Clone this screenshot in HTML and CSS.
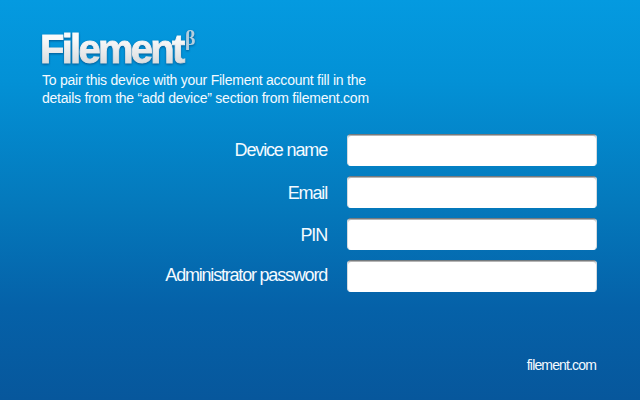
FILE: index.html
```html
<!DOCTYPE html>
<html lang="en">
<head>
<meta charset="utf-8">
<title>Filement</title>
<link rel="stylesheet" href="styles.css">
</head>
<body>
<main class="window">
  <header class="header">
    <h1 class="logo"><span class="name">Filement</span><span class="beta">β</span></h1>
    <p class="intro"><span class="line">To pair this device with your Filement account fill in the</span><span class="line">details from the “add device” section from filement.com</span></p>
  </header>
  <form class="form">
    <label class="label l1" for="device">Device name</label><input class="field" id="device">
    <label class="label l2" for="email">Email</label><input class="field" id="email">
    <label class="label l3" for="pin">PIN</label><input class="field" id="pin">
    <label class="label l4" for="password">Administrator password</label><input class="field" id="password" type="password">
  </form>
  <footer class="footer"><span class="site">filement.com</span></footer>
</main>
</body>
</html>
```

FILE: styles.css
```css
* { box-sizing: border-box; }
body { margin: 0; }
.window {
  width: 640px;
  height: 400px;
  overflow: hidden;
  display: flex;
  flex-direction: column;
  padding: 28px 43px 0 41px;
  color: #f4faff;
  font-family: "Liberation Sans", Arial, sans-serif;
  background: linear-gradient(#049ae0, #0391d6 20%, #0478bb 52%, #0561a8 77%, #07579c);
}
.header { height: 106px; }
.logo {
  margin: 0;
  height: 43px;
  display: flex;
  align-items: flex-start;
  filter: drop-shadow(0 1px 1px rgba(0, 40, 90, 0.55));
}
.name {
  width: 150px;
  margin-left: -1px;
  margin-right: -5px;
  font-size: 40px;
  line-height: 42px;
  letter-spacing: -2.75px;
  white-space: nowrap;
  background: linear-gradient(#fafafa 25%, #d9dcde 85%);
  background-clip: text;
  -webkit-background-clip: text;
  color: transparent;
  -webkit-text-stroke: 0.9px transparent;
}
.beta { font: bold 20px/20px "Liberation Serif", serif; color: #b5cfdf; }
.intro { margin: 0 0 0 1px; font-size: 14px; line-height: 18px; }
.line { display: block; white-space: nowrap; letter-spacing: -0.24px; }
.form {
  display: grid;
  grid-template-columns: 286px 250px;
  column-gap: 20px;
  row-gap: 10px;
  grid-auto-rows: 32px;
}
.label { text-align: right; font-size: 18px; line-height: 33px; letter-spacing: -1.15px; white-space: nowrap; }
.l2 { line-height: 34px; }
.l3 { line-height: 35px; }
.l4 { line-height: 31px; letter-spacing: -1.2px; }
.field { width: 250px; height: 32px; border: 1px solid #d5dade; border-top-color: #747a7e; border-bottom-color: #fff; border-radius: 4px; background: #fff; padding: 0 8px; box-shadow: inset 0 1px 0 #b5b5b5; }
.footer { margin-top: 64px; margin-right: 1px; text-align: right; font-size: 14px; line-height: 18px; letter-spacing: -0.85px; }
```
